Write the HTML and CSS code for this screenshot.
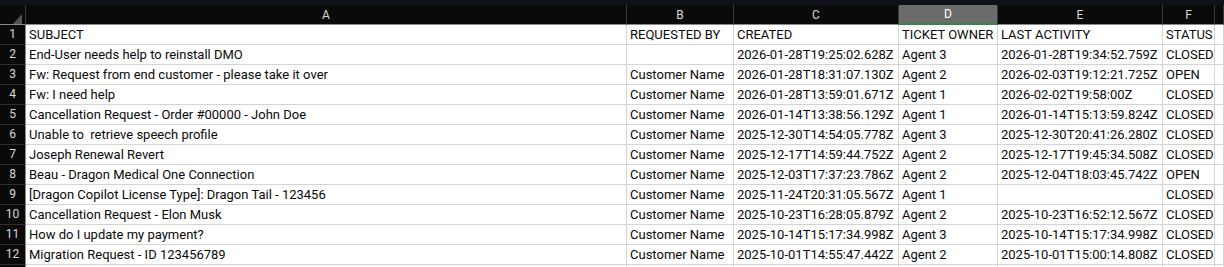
FILE: index.html
```html
<!DOCTYPE html>
<html>
<head>
  <link rel="stylesheet" href="styles.css">
</head>
<body>
  <div class="topbar"></div>
  <div class="sheet">
    <div class="row heads">
      <div class="corner"><svg width="25" height="19" viewBox="0 0 25 19"><polygon points="22,9 22,19 13,19" fill="#555"/></svg></div>
      <div class="cell">A</div>
      <div class="cell">B</div>
      <div class="cell">C</div>
      <div class="cell selected">D</div>
      <div class="cell">E</div>
      <div class="cell">F</div>
      <div class="cell"></div>
    </div>
    <div class="row">
      <div class="num">1</div>
      <div class="cell">SUBJECT</div>
      <div class="cell">REQUESTED BY</div>
      <div class="cell">CREATED</div>
      <div class="cell">TICKET OWNER</div>
      <div class="cell">LAST ACTIVITY</div>
      <div class="cell">STATUS</div>
      <div class="cell"></div>
    </div>
    <div class="row">
      <div class="num">2</div>
      <div class="cell">End-User needs help to reinstall DMO</div>
      <div class="cell"></div>
      <div class="cell">2026-01-28T19:25:02.628Z</div>
      <div class="cell">Agent 3</div>
      <div class="cell">2026-01-28T19:34:52.759Z</div>
      <div class="cell">CLOSED</div>
      <div class="cell"></div>
    </div>
    <div class="row">
      <div class="num">3</div>
      <div class="cell">Fw: Request from end customer - please take it over</div>
      <div class="cell">Customer Name</div>
      <div class="cell">2026-01-28T18:31:07.130Z</div>
      <div class="cell">Agent 2</div>
      <div class="cell">2026-02-03T19:12:21.725Z</div>
      <div class="cell">OPEN</div>
      <div class="cell"></div>
    </div>
    <div class="row">
      <div class="num">4</div>
      <div class="cell">Fw: I need help</div>
      <div class="cell">Customer Name</div>
      <div class="cell">2026-01-28T13:59:01.671Z</div>
      <div class="cell">Agent 1</div>
      <div class="cell">2026-02-02T19:58:00Z</div>
      <div class="cell">CLOSED</div>
      <div class="cell"></div>
    </div>
    <div class="row">
      <div class="num">5</div>
      <div class="cell">Cancellation Request - Order #00000 - John Doe</div>
      <div class="cell">Customer Name</div>
      <div class="cell">2026-01-14T13:38:56.129Z</div>
      <div class="cell">Agent 1</div>
      <div class="cell">2026-01-14T15:13:59.824Z</div>
      <div class="cell">CLOSED</div>
      <div class="cell"></div>
    </div>
    <div class="row">
      <div class="num">6</div>
      <div class="cell">Unable to  retrieve speech profile</div>
      <div class="cell">Customer Name</div>
      <div class="cell">2025-12-30T14:54:05.778Z</div>
      <div class="cell">Agent 3</div>
      <div class="cell">2025-12-30T20:41:26.280Z</div>
      <div class="cell">CLOSED</div>
      <div class="cell"></div>
    </div>
    <div class="row">
      <div class="num">7</div>
      <div class="cell">Joseph Renewal Revert</div>
      <div class="cell">Customer Name</div>
      <div class="cell">2025-12-17T14:59:44.752Z</div>
      <div class="cell">Agent 2</div>
      <div class="cell">2025-12-17T19:45:34.508Z</div>
      <div class="cell">CLOSED</div>
      <div class="cell"></div>
    </div>
    <div class="row">
      <div class="num">8</div>
      <div class="cell">Beau - Dragon Medical One Connection</div>
      <div class="cell">Customer Name</div>
      <div class="cell">2025-12-03T17:37:23.786Z</div>
      <div class="cell">Agent 2</div>
      <div class="cell">2025-12-04T18:03:45.742Z</div>
      <div class="cell">OPEN</div>
      <div class="cell"></div>
    </div>
    <div class="row">
      <div class="num">9</div>
      <div class="cell">[Dragon Copilot License Type]: Dragon Tail - 123456</div>
      <div class="cell">Customer Name</div>
      <div class="cell">2025-11-24T20:31:05.567Z</div>
      <div class="cell">Agent 1</div>
      <div class="cell"></div>
      <div class="cell">CLOSED</div>
      <div class="cell"></div>
    </div>
    <div class="row">
      <div class="num">10</div>
      <div class="cell">Cancellation Request - Elon Musk</div>
      <div class="cell">Customer Name</div>
      <div class="cell">2025-10-23T16:28:05.879Z</div>
      <div class="cell">Agent 2</div>
      <div class="cell">2025-10-23T16:52:12.567Z</div>
      <div class="cell">CLOSED</div>
      <div class="cell"></div>
    </div>
    <div class="row">
      <div class="num">11</div>
      <div class="cell">How do I update my payment?</div>
      <div class="cell">Customer Name</div>
      <div class="cell">2025-10-14T15:17:34.998Z</div>
      <div class="cell">Agent 3</div>
      <div class="cell">2025-10-14T15:17:34.998Z</div>
      <div class="cell">CLOSED</div>
      <div class="cell"></div>
    </div>
    <div class="row">
      <div class="num">12</div>
      <div class="cell">Migration Request - ID 123456789</div>
      <div class="cell">Customer Name</div>
      <div class="cell">2025-10-01T14:55:47.442Z</div>
      <div class="cell">Agent 2</div>
      <div class="cell">2025-10-01T15:00:14.808Z</div>
      <div class="cell">CLOSED</div>
      <div class="cell"></div>
    </div>
    <div class="row last">
      <div class="num"></div>
      <div class="cell"></div>
      <div class="cell"></div>
      <div class="cell"></div>
      <div class="cell"></div>
      <div class="cell"></div>
      <div class="cell"></div>
      <div class="cell"></div>
    </div>
  </div>
</body>
</html>
```

FILE: styles.css
```css
body {
  margin: 0;
  height: 267px;
  background: #fff;
  font-family: Roboto, "Liberation Sans", Arial, sans-serif;
  overflow: hidden;
}
.topbar {
  height: 5px;
  background: #0e1218;
}
.sheet {
  height: 262px;
  overflow: hidden;
}
.row {
  display: grid;
  grid-template-columns: 26px 601px 107px 165px 99px 165px 52px 1fr;
  height: 20px;
}
.cell, .num, .corner {
  box-sizing: border-box;
  height: 20px;
  border-right: 1px solid #d4d4d4;
  border-bottom: 1px solid #d4d4d4;
  padding: 0 3px;
  font-size: 13px;
  line-height: 19px;
  white-space: pre;
  overflow: hidden;
  color: #0a0a0a;
}
.heads .cell {
  background: #0a0a0a;
  color: #d8d8d8;
  text-align: center;
  font-size: 12px;
  line-height: 20px;
  border-right-color: #3a3a3a;
  border-bottom-color: #8a8a8a;
}
.heads .selected {
  background: #6b6b6b;
  color: #fff;
  border-bottom: 2px solid #33834a;
  line-height: 19px;
}
.corner {
  padding: 0;
  background: #0a0a0a;
  border-right-color: #3a3a3a;
  border-bottom-color: #8a8a8a;
}
.corner svg {
  display: block;
}
.num {
  padding: 0;
  background: #0a0a0a;
  color: #d8d8d8;
  text-align: center;
  font-size: 12px;
  border-right-color: #8a8a8a;
  border-bottom-color: #2e2e2e;
}
```
